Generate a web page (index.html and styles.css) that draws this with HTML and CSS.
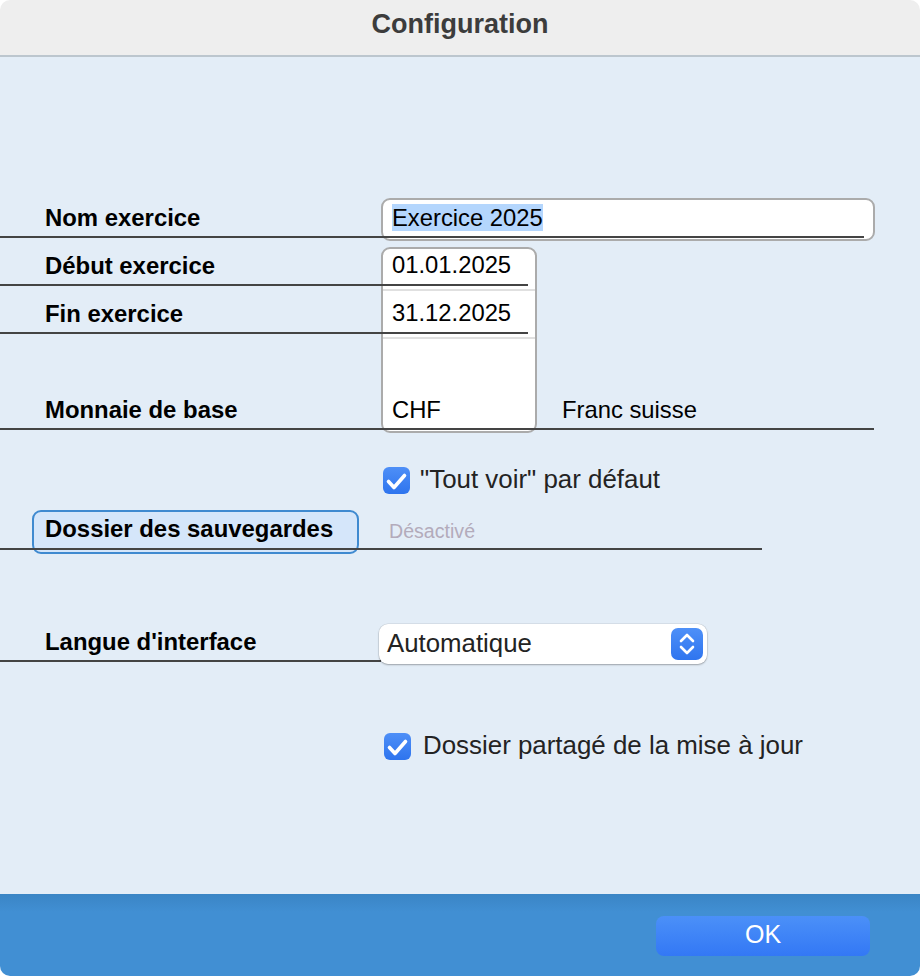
FILE: index.html
```html
<!DOCTYPE html>
<html lang="fr">
<head>
<meta charset="utf-8">
<title>Configuration</title>
<link rel="stylesheet" href="styles.css">
</head>
<body>
<div class="window">
  <header class="titlebar"><h1 class="title">Configuration</h1></header>
  <main class="content">
    <div class="grid">
      <div class="label r1">Nom exercice</div>
      <div class="box1 r1"><span class="sel">Exercice 2025</span></div>
      <div class="rule r1 w864"></div>

      <div class="label r2">Début exercice</div>
      <div class="label r3">Fin exercice</div>
      <div class="label r4">Monnaie de base</div>
      <div class="box2">
        <div class="cell c1">01.01.2025</div>
        <div class="cell c2">31.12.2025</div>
        <div class="cell c3">CHF</div>
      </div>
      <div class="desc r4">Franc suisse</div>
      <div class="rule r2 w528"></div>
      <div class="rule r3 w528"></div>
      <div class="rule r4 w874"></div>
    </div>

    <div class="check-row first">
      <svg class="checkbox" width="27" height="27" viewBox="0 0 27 27">
        <defs><linearGradient id="cb1" x1="0" y1="0" x2="0" y2="1"><stop offset="0" stop-color="#4e8ff7"/><stop offset="1" stop-color="#2e74ee"/></linearGradient></defs>
        <rect x="0" y="0" width="27" height="27" rx="6" fill="url(#cb1)"/>
        <path d="M5.5 14.5 L11 20.5 L21.5 8.5" fill="none" stroke="#fff" stroke-width="3.6" stroke-linecap="round" stroke-linejoin="round"/>
      </svg>
      <span class="check-text">"Tout voir" par défaut</span>
    </div>

    <div class="stack row-folder">
      <div class="folder-label">Dossier des sauvegardes</div>
      <div class="disabled">Désactivé</div>
      <div class="rule w762 rule-folder"></div>
    </div>

    <div class="stack row-lang">
      <div class="label-lang">Langue d'interface</div>
      <div class="rule w381 rule-lang"></div>
      <div class="select">
        <span class="select-text">Automatique</span>
        <svg class="stepper" width="32" height="32" viewBox="0 0 32 32">
          <defs><linearGradient id="st" x1="0" y1="0" x2="0" y2="1"><stop offset="0" stop-color="#4e90f8"/><stop offset="1" stop-color="#2f75ef"/></linearGradient></defs>
          <rect x="0" y="0" width="32" height="32" rx="7" fill="url(#st)"/>
          <path d="M10 13 L16 7 L22 13" fill="none" stroke="#fff" stroke-width="2.6" stroke-linecap="round" stroke-linejoin="round"/>
          <path d="M10 19 L16 25 L22 19" fill="none" stroke="#fff" stroke-width="2.6" stroke-linecap="round" stroke-linejoin="round"/>
        </svg>
      </div>
    </div>

    <div class="check-row second">
      <svg class="checkbox" width="27" height="27" viewBox="0 0 27 27">
        <defs><linearGradient id="cb2" x1="0" y1="0" x2="0" y2="1"><stop offset="0" stop-color="#4e8ff7"/><stop offset="1" stop-color="#2e74ee"/></linearGradient></defs>
        <rect x="0" y="0" width="27" height="27" rx="6" fill="url(#cb2)"/>
        <path d="M5.5 14.5 L11 20.5 L21.5 8.5" fill="none" stroke="#fff" stroke-width="3.6" stroke-linecap="round" stroke-linejoin="round"/>
      </svg>
      <span class="check-text">Dossier partagé de la mise à jour</span>
    </div>
  </main>
  <footer class="footer">
    <div class="ok">OK</div>
  </footer>
</div>
</body>
</html>
```

FILE: styles.css
```css
* { box-sizing: border-box; }

html, body {
  margin: 0;
  padding: 0;
  background: #ffffff;
}

body {
  font-family: "Liberation Sans", Arial, sans-serif;
  color: #000;
}

.window {
  width: 920px;
  height: 976px;
  border-radius: 10px;
  overflow: hidden;
  display: flex;
  flex-direction: column;
}

.titlebar {
  height: 57px;
  background: #eeeeee;
  border-bottom: 2px solid #bcc6ce;
  padding-top: 8px;
}

.title {
  margin: 0;
  text-align: center;
  font-size: 27px;
  line-height: 32px;
  font-weight: bold;
  color: #3c3c3c;
}

.content {
  flex: 1;
  background: #e3edf7;
  display: flex;
  flex-direction: column;
}

/* main form grid */
.grid {
  display: grid;
  grid-template-columns: 381px 156px 1fr;
  grid-template-rows: 48px 48px 48px 96px;
  margin-top: 133px;
}

.r1 { grid-row: 1; }
.r2 { grid-row: 2; }
.r3 { grid-row: 3; }
.r4 { grid-row: 4; }

.label {
  grid-column: 1;
  align-self: end;
  padding-left: 45px;
  margin-bottom: 6.5px;
  font-weight: bold;
  font-size: 23.9px;
  line-height: 28px;
}

.rule {
  height: 2px;
  background: #444444;
  justify-self: start;
  z-index: 2;
}

.grid .rule {
  grid-column: 1 / 4;
  align-self: end;
}

.w864 { width: 864px; }
.w528 { width: 528px; }
.w874 { width: 874px; }
.w762 { width: 762px; }
.w381 { width: 381px; }

.box1 {
  grid-column: 2 / 4;
  margin: 8px 45px -3px 0;
  background: #ffffff;
  border: 2px solid #ababab;
  border-radius: 9px;
  padding: 4px 9px 0;
  font-size: 23.8px;
  line-height: 28px;
  z-index: 1;
}

.sel {
  background: #b4d6fd;
}

.box2 {
  grid-column: 2;
  grid-row: 2 / 5;
  margin: 9px 0 -3px;
  background: #ffffff;
  border: 2px solid #ababab;
  border-radius: 9px;
  display: flex;
  flex-direction: column;
  z-index: 1;
}

.cell {
  display: flex;
  align-items: flex-end;
  padding-left: 9px;
  font-size: 23.8px;
  line-height: 28px;
}

.c1 { height: 40px; padding-bottom: 10px; }
.c2 { height: 48px; border-top: 2px solid #e0e0e0; padding-bottom: 10.5px; }
.c3 { flex: 1; border-top: 2px solid #e0e0e0; padding-bottom: 7px; }

.desc {
  grid-column: 3;
  align-self: end;
  padding-left: 25px;
  margin-bottom: 6.5px;
  font-size: 23.8px;
  line-height: 28px;
}

/* checkbox rows */
.check-row {
  display: flex;
  align-items: center;
  height: 28px;
}

.check-row.first {
  margin-top: 36px;
  margin-left: 383px;
  gap: 10px;
}

.check-row.second {
  margin-top: 68px;
  margin-left: 384px;
  gap: 12px;
}

.checkbox {
  flex: none;
  display: block;
}

.check-text {
  font-size: 25.9px;
  line-height: 28px;
  padding-bottom: 3px;
  color: #232323;
}

/* stacked rows */
.stack {
  display: grid;
}

.stack > * {
  grid-area: 1 / 1;
}

.row-folder {
  height: 44px;
  margin-top: 16px;
}

.folder-label {
  justify-self: start;
  margin-left: 32px;
  width: 327px;
  height: 44px;
  border: 2px solid #3f8ad0;
  background: #d5e6fa;
  border-radius: 9px;
  padding: 3px 0 0 11px;
  font-weight: bold;
  font-size: 23.9px;
  line-height: 28px;
}

.disabled {
  justify-self: start;
  align-self: start;
  margin-left: 389px;
  margin-top: 9.5px;
  font-size: 19.6px;
  line-height: 22px;
  color: #b3abbb;
}

.rule-folder {
  align-self: end;
  margin-bottom: 4px;
}

.row-lang {
  height: 40px;
  margin-top: 70px;
}

.label-lang {
  align-self: start;
  justify-self: start;
  margin-top: 4px;
  padding-left: 45px;
  font-weight: bold;
  font-size: 23.9px;
  line-height: 28px;
}

.rule-lang {
  align-self: start;
  margin-top: 36px;
  z-index: 0;
}

.select {
  justify-self: start;
  margin-left: 379px;
  width: 328px;
  height: 40px;
  background: #ffffff;
  border-radius: 9px;
  box-shadow: 0 1px 2px rgba(0, 0, 0, 0.28), 0 0 0 0.5px rgba(0, 0, 0, 0.1);
  display: flex;
  align-items: center;
  justify-content: space-between;
  padding: 0 4px 0 8px;
  z-index: 1;
}

.select-text {
  font-size: 25.8px;
  line-height: 38px;
  padding-bottom: 2px;
  color: #232323;
}

.stepper {
  display: block;
  flex: none;
}

/* footer */
.footer {
  height: 82px;
  background: linear-gradient(#3a85c5 0, #418fd3 18px);
  display: flex;
  justify-content: flex-end;
  padding: 22px 50px 0 0;
}

.ok {
  width: 214px;
  height: 40px;
  border-radius: 8px;
  background: linear-gradient(#4b90f8, #3378f5);
  color: #ffffff;
  font-size: 25px;
  line-height: 37px;
  padding-bottom: 3px;
  text-align: center;
}
```
